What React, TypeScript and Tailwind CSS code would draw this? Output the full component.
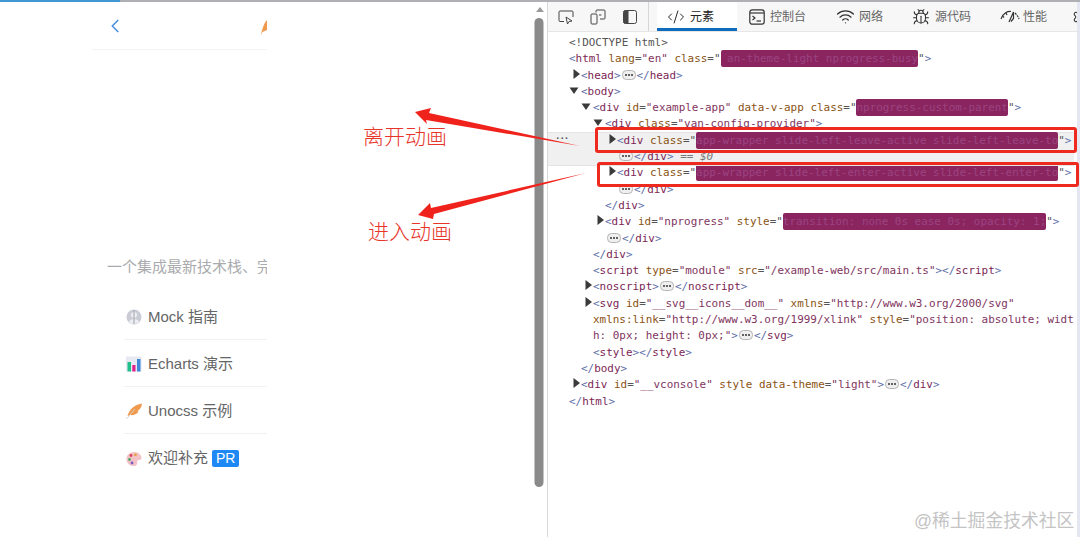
import { Bug, ChevronLeft, CodeXml, Settings, Wifi } from "lucide-react";
import type { ReactNode } from "react";

const cjk = "font-['Liberation_Sans','Noto_Sans_CJK_SC',sans-serif]";

function Feather() {
    return (
        <svg viewBox="0 0 16 16" className="w-4 h-4">
            <path d="M1.5 13 C3 7.5 7 2 16 0.5 C15.5 5 13.5 7 11.5 8 L12.5 9 C10.5 11.5 7 12.5 4 12 Z" fill="#f09a50" />
            <path d="M0.5 16 L9 6" stroke="#d8d2c4" strokeWidth="1" />
        </svg>
    );
}

function MockIcon() {
    return (
        <svg viewBox="0 0 16 16" className="w-4 h-4">
            <circle cx="8" cy="8" r="7.5" fill="#c9ccd4" />
            <circle cx="8" cy="6" r="3" fill="#eeeff3" />
            <path d="M3 13 C4 9 12 9 13 13 C11 15.5 5 15.5 3 13 Z" fill="#eeeff3" />
            <rect x="7" y="1" width="2" height="14" fill="#a9adb8" opacity="0.6" />
        </svg>
    );
}

function ChartIcon() {
    return (
        <svg viewBox="0 0 16 16" className="w-4 h-4">
            <rect x="0" y="0.5" width="15.5" height="15" fill="#e6e8f2" />
            <rect x="1.5" y="6" width="3.5" height="9.5" fill="#20c08a" />
            <rect x="6.3" y="9" width="3.2" height="6.5" fill="#e3218b" />
            <rect x="11" y="3" width="3.5" height="12.5" fill="#3f87d8" />
        </svg>
    );
}

function PaletteIcon() {
    return (
        <svg viewBox="0 0 16 16" className="w-4 h-4">
            <path d="M8 1 C12.5 1 15.5 4 15.5 7 C15.5 9.5 12.5 8.5 11.5 9.5 C10.5 11 12 12.5 10.5 14 C9.5 15 8.5 15 7.5 15 C3.5 15 0.5 12 0.5 8 C0.5 4 3.5 1 8 1 Z" fill="#f3c2c6" />
            <circle cx="5" cy="4.5" r="1.4" fill="#d8445c" />
            <circle cx="3.5" cy="8.5" r="1.4" fill="#4aa86a" />
            <circle cx="6" cy="12" r="1.4" fill="#7a5bc8" />
            <circle cx="9.5" cy="3.8" r="1.3" fill="#e0a030" />
        </svg>
    );
}

function MenuRow({ icon, children, last }: { icon: ReactNode; children: ReactNode; last?: boolean }) {
    return (
        <div className={`h-[47px] pt-[2px] flex items-center gap-[6px] pl-[2px] whitespace-nowrap text-[15px] text-[#646566] ${last ? "" : "border-b border-[#f0f1f2]"}`}>
            {icon}
            {children}
        </div>
    );
}

function LeftPage() {
    return (
        <div className={`w-[532px] shrink-0 bg-white pl-[92px] ${cjk}`}>
            <div className="w-[175px] overflow-hidden">
                <div className="h-[48px] flex items-center justify-between border-b border-[#f3f3f4]">
                    <ChevronLeft size={22} strokeWidth={1.8} className="ml-[12px] text-[#4a90e2]" />
                    {/* 右侧被裁掉的羽毛图标 */}
                    <svg viewBox="0 0 6 15" className="w-[6px] h-[15px] mt-[3px]">
                        <path d="M0 15 C1 9 3 3 6 0 V10 L1.5 12 Z" fill="#f09a50" />
                    </svg>
                </div>
                <p className="mt-[207px] ml-[15px] whitespace-nowrap text-[15px] leading-[20px] text-[#a9abae]">
                    一个集成最新技术栈、完整干货方案
                </p>
                <div className="mt-[16px] ml-[32px] w-[160px]">
                    <MenuRow icon={<MockIcon />}>Mock 指南</MenuRow>
                    <MenuRow icon={<ChartIcon />}>Echarts 演示</MenuRow>
                    <MenuRow icon={<Feather />}>Unocss 示例</MenuRow>
                    <MenuRow icon={<PaletteIcon />} last>
                        欢迎补充
                        <span className="-ml-[2px] h-[17px] px-[4px] rounded-[2px] bg-[#1e88f5] text-white text-[14px] leading-[17px]">PR</span>
                    </MenuRow>
                </div>
            </div>
        </div>
    );
}

function ScrollStrip() {
    return (
        <div className="w-[15px] shrink-0 bg-white flex flex-col items-center">
            <div className="mt-[5px] w-0 h-0 border-x-[4px] border-x-transparent border-b-[5px] border-b-[#9a9a9a]" />
            <div className="mt-[6px] w-[9px] h-[469px] rounded-[5px] bg-[#8a8a8a] -translate-x-[0.5px]" />
        </div>
    );
}

function ToolIcons() {
    return (
        <div className="w-[100px] shrink-0 flex items-center gap-[16px] pl-[10px] text-[#444]">
            <svg viewBox="0 0 16 16" className="w-4 h-4" fill="none" stroke="currentColor" strokeWidth="1">
                <path d="M6 12.5 H2 a1 1 0 0 1 -1 -1 V3 a1 1 0 0 1 1 -1 H14 a1 1 0 0 1 1 1 V8" />
                <path d="M8 8 L9.5 15 L11 12.5 L14 12 Z" />
            </svg>
            <svg viewBox="0 0 16 16" className="w-4 h-4" fill="none" stroke="currentColor" strokeWidth="1">
                <path d="M6 3.5 V2 a1 1 0 0 1 1 -1 H14 a1 1 0 0 1 1 1 V9 a1 1 0 0 1 -1 1 H10" />
                <rect x="1" y="5" width="6" height="10" rx="1" />
                <path d="M9 6 H11.5" />
            </svg>
            <svg viewBox="0 0 16 16" className="w-4 h-4" fill="none" stroke="currentColor" strokeWidth="1">
                <rect x="1.5" y="1.5" width="13" height="13" rx="2" />
                <path d="M2 2 H6 V14 H2 Z" fill="currentColor" />
            </svg>
        </div>
    );
}

function ConsoleIcon() {
    return (
        <svg viewBox="0 0 16 16" className="w-4 h-4 text-[#333]" fill="none" stroke="currentColor" strokeWidth="1.2">
            <rect x="0.8" y="0.8" width="14.4" height="14.4" rx="2.5" />
            <path d="M1 4 H15" />
            <path d="M3.5 7 L6 9 L3.5 11" />
            <path d="M7.5 12 H12" />
        </svg>
    );
}

function PerfIcon() {
    return (
        <svg viewBox="0 0 20 16" className="w-5 h-4 text-[#333]" fill="none" stroke="currentColor" strokeWidth="1.2">
            <path d="M1 10 C3 4 8 2 11 2.5" />
            <path d="M15 4 C17 6 18.5 8 19 10" strokeDasharray="2 1" />
            <path d="M9 13 L13.5 3 L13.5 9.5 L11 12.5" />
            <path d="M2.5 7 L4 8.5 M6 4 L7 6" />
        </svg>
    );
}

function Tab({ icon, label, active, className }: { icon: ReactNode; label: string; active?: boolean; className: string }) {
    return (
        <div className={`h-full shrink-0 flex items-center text-[12px] ${className} ${active ? "bg-white text-[#222] shadow-[inset_0_-3px_0_#0f6cbd]" : "text-[#666]"}`}>
            {icon}
            {label}
        </div>
    );
}

function TopTabs() {
    return (
        <div className={`h-[30px] shrink-0 flex items-center overflow-hidden bg-[#f7f7f7] border-b border-[#e6e6e6] ${cjk}`}>
            <ToolIcons />
            <div className="w-px h-full shrink-0 bg-[#d6d6d6]" />
            <div className="h-full pl-[8px] flex">
                <Tab className="w-[80px] pl-[10px] gap-[5px]" active label="元素" icon={<CodeXml size={18} strokeWidth={1.3} />} />
                <Tab className="w-[87px] pl-[12px] gap-[5px]" label="控制台" icon={<ConsoleIcon />} />
                <Tab className="w-[76px] pl-[12px] gap-[4px]" label="网络" icon={<Wifi size={19} strokeWidth={1.6} className="text-[#333]" />} />
                <Tab className="w-[88px] pl-[12px] gap-[5px]" label="源代码" icon={<Bug size={18} strokeWidth={1.4} className="text-[#333]" />} />
                <Tab className="w-[72px] pl-[12px] gap-[3px]" label="性能" icon={<PerfIcon />} />
                <Tab className="w-[30px] pl-[12px]" label="" icon={<Settings size={18} strokeWidth={1.4} className="text-[#333]" />} />
            </div>
        </div>
    );
}

const B = ({ children }: { children: ReactNode }) => <span className="text-[#5d6ea8]">{children}</span>;
const T = ({ children }: { children: ReactNode }) => <span className="text-[#7c1f55]">{children}</span>;
const A = ({ children }: { children: ReactNode }) => <span className="text-[#8a5212]">{children}</span>;
const V = ({ children }: { children: ReactNode }) => <span className="text-[#7f3560]">{children}</span>;
const Q = ({ children }: { children: ReactNode }) => <span className="text-[#555]">{children}</span>;

function Mask({ children }: { children: string }) {
    return (
        <span className="bg-[#8b2560] rounded-[2px] text-[#9a4480] py-[2px]">{children}</span>
    );
}

function Open() {
    return (
        <svg viewBox="0 0 12 8" className="inline-block w-[12px] h-[8px] align-baseline">
            <path d="M0.5 0.5 H9.5 L5 7 Z" fill="#3a3a3a" />
        </svg>
    );
}

function Closed() {
    return (
        <svg viewBox="0 0 8 10" className="inline-block w-[8px] h-[10px] align-baseline">
            <path d="M0.5 0 L7 5 L0.5 10 Z" fill="#3a3a3a" />
        </svg>
    );
}

function More() {
    return (
        <svg viewBox="0 0 14 10" className="inline-block w-[14px] h-[10px] mx-[1px] align-[-1px]">
            <rect x="0.5" y="0.5" width="13" height="9" rx="4" fill="#efefef" stroke="#b5b5b5" />
            <circle cx="4" cy="5" r="1" fill="#333" />
            <circle cx="7" cy="5" r="1" fill="#333" />
            <circle cx="10" cy="5" r="1" fill="#333" />
        </svg>
    );
}

function Line({ className, children }: { className: string; children: ReactNode }) {
    return <div className={`h-[16.3px] leading-[16.3px] whitespace-nowrap ${className}`}>{children}</div>;
}

function CodeTree() {
    return (
        <div className="font-['DejaVu_Sans_Mono',monospace] text-[10.95px] pt-[3px] text-[#555]">
            <Line className="pl-[21px]"><Q>{"<!DOCTYPE html>"}</Q></Line>
            <Line className="pl-[21px]">
                <B>{"<"}</B><T>html</T> <A>lang</A><Q>=</Q><V>"en"</V> <A>class</A><Q>="</Q><Mask> an-theme-light nprogress-busy</Mask><Q>"</Q><B>{">"}</B>
            </Line>
            <Line className="pl-[25px]">
                <Closed /><B>{"<"}</B><T>head</T><B>{">"}</B><More /><B>{"</"}</B><T>head</T><B>{">"}</B>
            </Line>
            <Line className="pl-[21px]"><Open /><B>{"<"}</B><T>body</T><B>{">"}</B></Line>
            <Line className="pl-[33px]">
                <Open /><B>{"<"}</B><T>div</T> <A>id</A><Q>=</Q><V>"example-app"</V> <A>data-v-app</A> <A>class</A><Q>="</Q><Mask>nprogress-custom-parent</Mask><Q>"</Q><B>{">"}</B>
            </Line>
            <Line className="pl-[45px]">
                <Open /><B>{"<"}</B><T>div</T> <A>class</A><Q>=</Q><V>"van-config-provider"</V><B>{">"}</B>
            </Line>
            <div className="relative mr-[3px] bg-[#f0f0f0] border-y border-[#e4e4e4] -my-px">
                <span className="absolute left-[7px] top-[-3px] text-[9px] tracking-[-1px] font-bold text-[#555]">...</span>
                <Line className="pl-[61px]">
                    <Closed /><B>{"<"}</B><T>div</T> <A>class</A><Q>="</Q><Mask>app-wrapper slide-left-leave-active slide-left-leave-to</Mask><Q>"</Q><B>{">"}</B>
                </Line>
                <Line className="pl-[70px]">
                    <More /><B>{"</"}</B><T>div</T><B>{">"}</B> <span className="italic text-[#777]">== $0</span>
                </Line>
            </div>
            <Line className="pl-[61px]">
                <Closed /><B>{"<"}</B><T>div</T> <A>class</A><Q>="</Q><Mask>app-wrapper slide-left-enter-active slide-left-enter-to</Mask><Q>"</Q><B>{">"}</B>
            </Line>
            <Line className="pl-[70px]"><More /><B>{"</"}</B><T>div</T><B>{">"}</B></Line>
            <Line className="pl-[57px]"><B>{"</"}</B><T>div</T><B>{">"}</B></Line>
            <Line className="pl-[49px]">
                <Closed /><B>{"<"}</B><T>div</T> <A>id</A><Q>=</Q><V>"nprogress"</V> <A>style</A><Q>="</Q><Mask>transition: none 0s ease 0s; opacity: 1;</Mask><Q>"</Q><B>{">"}</B>
            </Line>
            <Line className="pl-[58px]"><More /><B>{"</"}</B><T>div</T><B>{">"}</B></Line>
            <Line className="pl-[45px]"><B>{"</"}</B><T>div</T><B>{">"}</B></Line>
            <Line className="pl-[45px]">
                <B>{"<"}</B><T>script</T> <A>type</A><Q>=</Q><V>"module"</V> <A>src</A><Q>=</Q><V>"/example-web/src/main.ts"</V><B>{">"}</B><B>{"</"}</B><T>script</T><B>{">"}</B>
            </Line>
            <Line className="pl-[37px]">
                <Closed /><B>{"<"}</B><T>noscript</T><B>{">"}</B><More /><B>{"</"}</B><T>noscript</T><B>{">"}</B>
            </Line>
            <Line className="pl-[37px]">
                <Closed /><B>{"<"}</B><T>svg</T> <A>id</A><Q>=</Q><V>"__svg__icons__dom__"</V> <A>xmlns</A><Q>=</Q><V>"http://www.w3.org/2000/svg"</V>
            </Line>
            <Line className="pl-[45px]">
                <A>xmlns:link</A><Q>=</Q><V>"http://www.w3.org/1999/xlink"</V> <A>style</A><Q>=</Q><V>"position: absolute; widt</V>
            </Line>
            <Line className="pl-[45px]">
                <V>h: 0px; height: 0px;"</V><B>{">"}</B><More /><B>{"</"}</B><T>svg</T><B>{">"}</B>
            </Line>
            <Line className="pl-[45px]"><B>{"<"}</B><T>style</T><B>{">"}</B><B>{"</"}</B><T>style</T><B>{">"}</B></Line>
            <Line className="pl-[33px]"><B>{"</"}</B><T>body</T><B>{">"}</B></Line>
            <Line className="pl-[25px]">
                <Closed /><B>{"<"}</B><T>div</T> <A>id</A><Q>=</Q><V>"__vconsole"</V> <A>style</A> <A>data-theme</A><Q>=</Q><V>"light"</V><B>{">"}</B><More /><B>{"</"}</B><T>div</T><B>{">"}</B>
            </Line>
            <Line className="pl-[21px]"><B>{"</"}</B><T>html</T><B>{">"}</B></Line>
        </div>
    );
}

function Annotations() {
    return (
        <>
            <svg viewBox="0 0 1080 537" className="absolute inset-0 w-[1080px] h-[537px] pointer-events-none">
                <polygon points="415,112 431,108 429,113 580,146 426,120 427,124" fill="#f0231c" />
                <polygon points="418,215 430,203 431,208 586,173 434,214 433,219" fill="#f0231c" />
            </svg>
            <div className="absolute left-[595px] top-[127px] w-[482px] h-[26px] rounded-[3px] border-[3px] border-[#ee2a1e]" />
            <div className="absolute left-[597px] top-[162px] w-[482px] h-[25px] rounded-[3px] border-[3px] border-[#ee2a1e]" />
            <span className="absolute left-[363px] top-[121px] text-[21px] leading-[28px] text-[#e8352a] font-['Noto_Sans_CJK_SC',sans-serif] font-light">离开动画</span>
            <span className="absolute left-[368px] top-[216px] text-[21px] leading-[28px] text-[#e8352a] font-['Noto_Sans_CJK_SC',sans-serif] font-light">进入动画</span>
            <span className="absolute left-[914px] top-[508px] text-[17.8px] leading-[26px] text-[#c4c4c4] font-['Liberation_Sans','Noto_Sans_CJK_SC',sans-serif]">@稀土掘金技术社区</span>
        </>
    );
}

export default function App() {
    return (
        <div className="relative w-[1080px] h-[537px] overflow-hidden bg-white flex flex-col">
            <div className="h-[2px] shrink-0 bg-[#b0b0b4]">
                <div className="w-[120px] h-[3px] bg-[#3f97d4] shadow-[0_1px_6px_#3f97d466]" />
            </div>
            <div className="flex-1 flex min-h-0">
                <LeftPage />
                <ScrollStrip />
                <div className="flex-1 min-w-0 flex flex-col border-l border-[#d9d9d9] border-r-[3px] border-r-[#e4e6f2]">
                    <TopTabs />
                    <CodeTree />
                </div>
            </div>
            <Annotations />
        </div>
    );
}
